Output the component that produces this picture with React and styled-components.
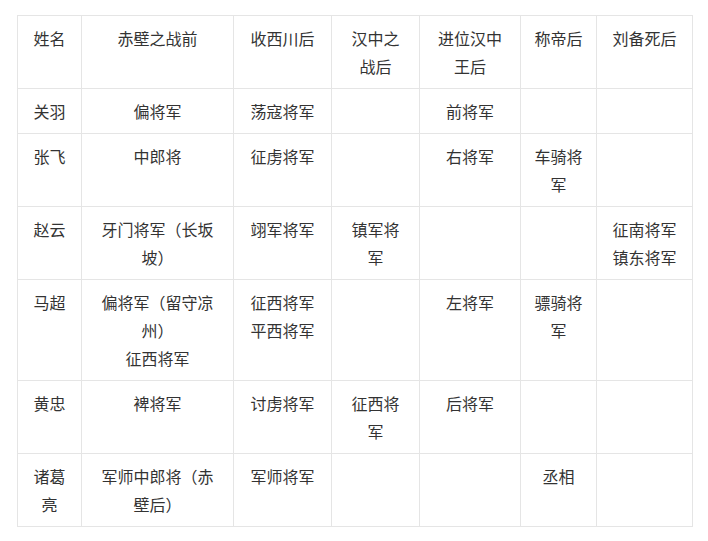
import React from "react";
import styled, { createGlobalStyle } from "styled-components";

const GlobalStyle = createGlobalStyle`
  html, body {
    margin: 0;
    padding: 0;
    background: #ffffff;
  }
  body {
    font-family: "Noto Sans CJK SC", "Noto Sans", sans-serif;
  }
`;

const Page = styled.div`
  padding: 15px 0 0 17px;
`;

const Grid = styled.div`
  display: grid;
  grid-template-columns: 64px 152px 98px 88px 101px 76px 96px;
  width: max-content;
  border-left: 1px solid #e5e5e5;
  border-top: 1px solid #e5e5e5;
`;

const Cell = styled.div`
  box-sizing: border-box;
  border-right: 1px solid #e5e5e5;
  border-bottom: 1px solid #e5e5e5;
  padding: 8px 12px;
  font-size: 16px;
  line-height: 28px;
  color: #333333;
  text-align: center;
  font-weight: ${(p) => (p.$head ? 400 : 400)};
  word-break: normal;
`;

const Line = styled.span`
  display: block;
`;

const header = ["姓名", "赤壁之战前", "收西川后", "汉中之战后", "进位汉中王后", "称帝后", "刘备死后"];

const rows = [
  ["关羽", "偏将军", "荡寇将军", "", "前将军", "", ""],
  ["张飞", "中郎将", "征虏将军", "", "右将军", "车骑将军", ""],
  ["赵云", "牙门将军（长坂坡）", "翊军将军", "镇军将军", "", "", ["征南将军", "镇东将军"]],
  ["马超", ["偏将军（留守凉州）", "征西将军"], ["征西将军", "平西将军"], "", "左将军", "骠骑将军", ""],
  ["黄忠", "裨将军", "讨虏将军", "征西将军", "后将军", "", ""],
  ["诸葛亮", "军师中郎将（赤壁后）", "军师将军", "", "", "丞相", ""],
];

function renderContent(v) {
  if (Array.isArray(v)) {
    return v.map((t, i) => <Line key={i}>{t}</Line>);
  }
  return v;
}

export default function App() {
  return (
    <>
      <GlobalStyle />
      <Page>
        <Grid>
          {header.map((h, i) => (
            <Cell key={`h${i}`} $head>
              {h}
            </Cell>
          ))}
          {rows.map((r, ri) =>
            r.map((c, ci) => <Cell key={`${ri}-${ci}`}>{renderContent(c)}</Cell>)
          )}
        </Grid>
      </Page>
    </>
  );
}
